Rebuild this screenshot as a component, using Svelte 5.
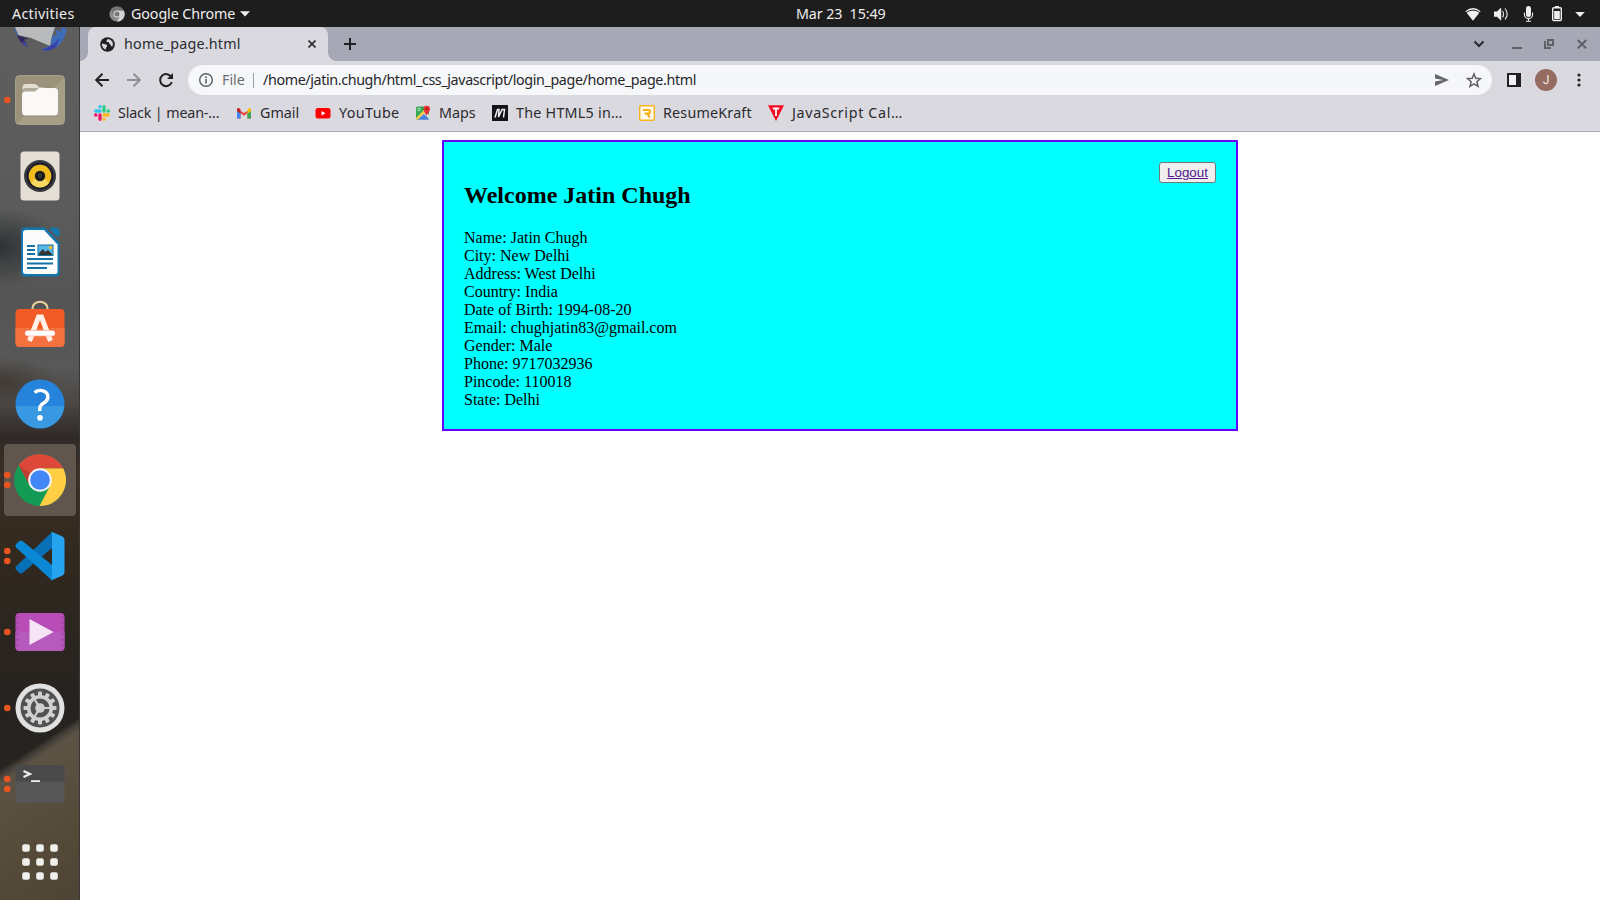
<script>
  const details = [
    ['Name', 'Jatin Chugh'],
    ['City', 'New Delhi'],
    ['Address', 'West Delhi'],
    ['Country', 'India'],
    ['Date of Birth', '1994-08-20'],
    ['Email', 'chughjatin83@gmail.com'],
    ['Gender', 'Male'],
    ['Phone', '9717032936'],
    ['Pincode', '110018'],
    ['State', 'Delhi']
  ];

  const dock = [
    { id: 'mail', dots: 0 },
    { id: 'files', dots: 1 },
    { id: 'music', dots: 0 },
    { id: 'writer', dots: 0 },
    { id: 'software', dots: 0 },
    { id: 'help', dots: 0 },
    { id: 'chrome', dots: 2, active: true },
    { id: 'code', dots: 2 },
    { id: 'videos', dots: 1 },
    { id: 'settings', dots: 1 },
    { id: 'terminal', dots: 2 },
    { id: 'apps', dots: 0 }
  ];

  // width: slot from the start of the icon to the start of the next one
  const bookmarks = [
    { id: 'slack', label: 'Slack | mean-…', width: 142 },
    { id: 'gmail', label: 'Gmail', width: 79 },
    { id: 'youtube', label: 'YouTube', width: 100 },
    { id: 'maps', label: 'Maps', width: 77 },
    { id: 'html5', label: 'The HTML5 in…', width: 147 },
    { id: 'resume', label: 'ResumeKraft', width: 129 },
    { id: 'js', label: 'JavaScript Cal…', width: 160 }
  ];

  const teeth = [0, 30, 60, 90, 120, 150, 180, 210, 240, 270, 300, 330];
  const grid = [-14, 0, 14];
</script>

<div class="screen">
  <header class="topbar">
    <span class="activities">Activities</span>
    <svg class="app-icon" width="16" height="16" viewBox="-8 -8 16 16">
      <circle r="7.6" fill="#8c8c8c" />
      <path d="M0-3.6H6.8A7.6 7.6 0 0 1 0 7.6L3.1 1.8Z" fill="#d2d2d2" />
      <path d="M-6.5-3.9A7.6 7.6 0 0 1 6.7-3.6H0L-3.1 1.8Z" fill="#737373" />
      <circle r="3.5" fill="#ddd" /><circle r="2.5" fill="#777" />
    </svg>
    <span class="app-name">Google Chrome</span>
    <svg class="app-caret" width="10" height="6" viewBox="0 0 10 6"><path d="M0 .3H10L5 5.6Z" fill="#eee" /></svg>
    <span class="clock">Mar 23&nbsp; 15:49</span>
    <svg class="status" width="124" height="20" viewBox="1464 3 124 20" fill="#efefef">
      <path d="M1465.4 10.2Q1473 4 1480.6 10.2L1473 19.8Z" fill="#efefef" />
      <path d="M1466 11.7Q1473 6.3 1480 11.7" fill="none" stroke="#1d1d1d" stroke-width="1" />
      <path d="M1494 10.5h3l4.2-4v13.2l-4.2-4h-3z" />
      <path d="M1502.5 10q2.2 3 0 6.3M1505 7.5q4.4 5.5 0 11" fill="none" stroke="#dedede" stroke-width="1.2" />
      <rect x="1526" y="5" width="5" height="11" rx="2.5" />
      <path d="M1524.4 11.5v2a4.1 4.1 0 0 0 8.2 0v-2M1528.5 17.6v2.8M1526 20.3h5" fill="none" stroke="#efefef" stroke-width="1.1" />
      <rect x="1552.7" y="6.7" width="8.6" height="12.8" rx="1" fill="none" stroke="#efefef" stroke-width="1.4" />
      <rect x="1555" y="5" width="4" height="1.5" /><rect x="1554.2" y="10" width="5.6" height="8" />
      <path d="M1575.2 11h9.6l-4.8 5z" />
    </svg>
  </header>

  <div class="desktop">
    <nav class="dock">
      {#each dock as item}
        <div class="dock-item" class:active={item.active} class:apps={item.id === 'apps'}>
          <svg width="72" height="72" viewBox="-36 -36 72 72">
            {#if item.id === 'mail'}
              <path d="M-25 3H15L12 12L10 22L-9 14L-22 11Z" fill="#b9babb" />
              <path d="M-25 4L-22 10L-22 13L-26 6Z" fill="#3f62a4" />
              <path d="M-23 11L-11 15L-16 15.500L-12 23Q-20 20-23 11Z" fill="#33265f" />
              <path d="M-19 17L-14 19L-12 23Q-17 21-19 17Z" fill="#3f45a8" />
              <path d="M27 5Q24 17 17 23Q9 28 1 26L11 21L12 12L17 11L15 5L20 8L22 3Z" fill="#3d6cb8" />
              <path d="M1 26Q10 24 20 14L16 23Q9 28 1 26Z" fill="#3c3faa" />
            {:else if item.id === 'files'}
              <rect x="-24.500" y="-24.500" width="49" height="49" rx="4" fill="#9c927b" stroke="#b0a993" stroke-width=".8" />
              <path d="M-24 24L24-22V20Q24 24 20 24H-20Q-24 24-24 20Z" fill="#a79e87" />
              <path d="M-17.500 0V-12.500Q-17.500-16-14-16H-5Q-3-16-1-12.500H4V0Z" fill="#e3dfd5" />
              <rect x="-18" y="-12" width="36" height="28.500" rx="4" fill="#807763" opacity=".5" />
              <path d="M-18-5Q-18-8.500-14.500-8.500H-5L-1-12H14.500Q18-12 18-8.500V12Q18 15.500 14.500 15.500H-14.500Q-18 15.500-18 12Z" fill="#faf9f7" />
            {:else if item.id === 'music'}
              <rect x="-19.500" y="-24.500" width="39" height="49" rx="3.500" fill="#e3dfd4" />
              <circle r="16" fill="#3c3c42" /><circle r="13.700" fill="#1d1e2a" />
              <circle r="11.300" fill="#f0bd1c" /><path d="M-9 7A11.300 11.300 0 0 0 9 7L4 2H-4Z" fill="#fad860" />
              <circle r="5.200" fill="#1b1b1b" /><circle r="2.300" cy="-.6" fill="#343434" />
            {:else if item.id === 'writer'}
              <path d="M-15.500-24.500H5L19.500-9.500V20.500Q19.500 24.500 15.500 24.500H-15.500Q-19 24.500-19 20.500V-20.500Q-19-24.500-15.500-24.500Z" fill="#1377ad" />
              <path d="M-14-22H4L17.500-7.500V19.500Q17.500 22 15 22H-14Q-17 22-17 19.500V-19.500Q-17-22-14-22Z" fill="#fcfcfc" />
              <path d="M9.500-24.500H15.500Q19.500-24.500 19.500-20.500V-15Q13.500-16 9.500-24.500Z" fill="#1478ae" />
              <g fill="#1672a3">
                <rect x="-13" y="-7" width="8" height="2" /><rect x="-13" y="-3" width="8" height="2" /><rect x="-13" y="1" width="8" height="2" />
                <rect x="-13" y="6" width="26" height="2" /><rect x="-13" y="10.500" width="26" height="2" /><rect x="-13" y="15" width="20" height="2" />
              </g>
              <rect x="-2" y="-7" width="15" height="10.500" fill="#58b7e9" stroke="#1672a3" />
              <path d="M-1 3V1L3-3L5 0L8-2L12 2V3Z" fill="#333" /><circle cx="10.500" cy="-4.500" r="1.800" fill="#edbd28" />
            {:else if item.id === 'software'}
              <path d="M-7.500-19V-20A7.500 6.200 0 0 1 7.500-20V-18" fill="none" stroke="#e7cf9e" stroke-width="2" />
              <rect x="-24.500" y="-19" width="49" height="38" rx="4" fill="#f15a24" />
              <path d="M-24.500 0H24.500V15Q24.500 19 20.500 19H-20.500Q-24.500 19-24.500 15Z" fill="#f3713e" />
              <path d="M-10.500 13L-1.500-11H1.500L10.500 13" fill="none" stroke="#fff0e9" stroke-width="5" />
              <rect x="-15" y="2.500" width="30" height="5.500" rx="2.500" fill="#fff" stroke="#f9a98b" stroke-width=".6" />
            {:else if item.id === 'help'}
              <circle r="24.500" fill="#2583dc" /><path d="M-24.400 2H24.400A24.500 24.500 0 0 1-24.400 2Z" fill="#3998e2" />
              <path d="M-5.500-11.500Q-1.500-14.500 3-13.200Q8.500-11.500 7.800-6Q7-2.500 3-.5Q-.5 1.500-.3 7" fill="none" stroke="#fff" stroke-width="3.400" />
              <circle cy="13.800" r="2.900" fill="#fff" />
            {:else if item.id === 'chrome'}
              <circle r="26" fill="#139b56" />
              <path d="M0-11.700H23.200A26 26 0 0 1-.5 26L10.100 5.800Z" fill="#ffce44" />
              <path d="M-21.300-14.800A26 26 0 0 1 23.200-11.700H0L-10.100 5.800Z" fill="#de4839" />
              <path d="M-21.300-14.800L-10.100 5.800L-10-7Z" fill="#ae3830" opacity=".6" />
              <circle r="11.800" fill="#f3f3f8" /><circle r="9.800" fill="#4285f4" />
            {:else if item.id === 'code'}
              <path d="M12-24L-24 10.500Q-25.300 12-24 13.500L-20.500 17Q-19.200 18-17.500 17L12-8Z" fill="#0770b6" />
              <path d="M12 24.500L-24-8.500Q-25.300-10.500-24-12L-20.500-15Q-19-16-17.500-15L12 9Z" fill="#0a87d5" />
              <path d="M11-24.500L22.500-19.500Q24.500-18.500 24.500-16V16Q24.500 18.500 22.500 19.500L11 24.500Q12 24 12 21V-21Q12-24 11-24.500Z" fill="#26a3ef" />
            {:else if item.id === 'videos'}
              <rect x="-24.500" y="-19" width="49" height="38" rx="4" fill="#b94db8" />
              <path d="M-24.500 0H24.500V15Q24.500 19 20.500 19H-20.500Q-24.500 19-24.500 15Z" fill="#b65bbd" />
              <path d="M-22.500-16V18M22.500-16V18" stroke="#9a48a6" stroke-width="3" stroke-dasharray="3 2.500" opacity=".55" />
              <path d="M-10.500-13L13.500 0L-10.500 13Z" fill="#f5e5f4" />
            {:else if item.id === 'settings'}
              <circle r="24.500" fill="#e1e1e1" /><circle r="19.500" fill="#515151" />
              {#each teeth as angle}
                <rect x="-2" y="-16.500" width="4" height="5" rx="1" fill="#d0d0d0" transform="rotate({angle})" />
              {/each}
              <circle r="11.300" fill="none" stroke="#d0d0d0" stroke-width="3.500" />
              <circle r="4.800" fill="#d0d0d0" />
              <path d="M0 0H11M0 0L-6-9.500M0 0L-6 9.500" stroke="#d0d0d0" stroke-width="2.200" />
            {:else if item.id === 'terminal'}
              <rect x="-24.500" y="-19" width="49" height="38" rx="4" fill="#565656" />
              <path d="M-20.500-19H20.500Q24.500-19 24.500-15V-2.500H-24.500V-15Q-24.500-19-20.500-19Z" fill="#494949" />
              <path d="M-16.500-13L-10-10L-16.500-7" fill="none" stroke="#eee" stroke-width="2.200" />
              <rect x="-9" y="-3.800" width="9" height="1.800" fill="#eee" />
            {:else}
              {#each grid as y}
                {#each grid as x}
                  <rect x={x - 3.8} y={y - 3.8} width="7.600" height="7.600" rx="2" fill="#f0f0ee" />
                {/each}
              {/each}
            {/if}
            {#if item.dots === 1}
              <circle cx="-32.700" r="3.300" fill="#e95420" />
            {:else if item.dots === 2}
              <circle cx="-32.700" cy="-5" r="3.300" fill="#e95420" /><circle cx="-32.700" cy="5" r="3.300" fill="#e95420" />
            {/if}
          </svg>
        </div>
      {/each}
    </nav>

    <section class="browser">
      <div class="tabstrip">
        <div class="tab">
          <svg width="15" height="15" viewBox="0 0 15 15">
            <circle cx="7.500" cy="7.500" r="7.300" fill="#202124" />
            <path d="M1.800 6.600L5 7.200Q7.500 7.200 7 9.500Q5.500 10.500 5.700 12.800Q2 11.300 1.800 6.600ZM8.200 2Q5.500 3.500 7 5L9 5.200Q9 7 10.500 7.500Q10.500 9.500 12.400 9.800Q13.500 7.500 12.500 5Q11 2.500 8.200 2Z" fill="#dad9df" />
          </svg>
          <span class="tab-title">home_page.html</span>
          <svg width="8" height="8" viewBox="0 0 8 8"><path d="M.5.5L7.500 7.500M7.500.5L.5 7.500" stroke="#2a2a2e" stroke-width="1.600" /></svg>
        </div>
        <svg class="plus" width="12" height="12" viewBox="0 0 12 12"><path d="M6 0V12M0 6H12" stroke="#202124" stroke-width="2" /></svg>
        <svg class="controls" width="118" height="14" viewBox="1472 37 118 14" fill="none" stroke="#5f6066" stroke-width="2">
          <path d="M1474.500 41.500L1479 46L1483.500 41.500" stroke="#28282c" />
          <path d="M1512 48H1522" />
          <path d="M1548 40H1553V45H1548ZM1545 41V48H1551" />
          <path d="M1577.800 40L1586.200 48.400M1586.200 40L1577.800 48.400" />
        </svg>
      </div>

      <div class="toolbar">
        <svg width="80" height="16" viewBox="94 72 80 16" fill="none" stroke="#202124" stroke-width="2">
          <path d="M109 80H96.500M102.500 73.700L96.200 80L102.500 86.300" />
          <path d="M127 80H139.500M133.500 73.700L139.800 80L133.500 86.300" stroke="#8f8f96" />
          <path d="M171.300 77A6 6 0 1 0 171.800 82.200" /><path d="M173 73V79H167Z" fill="#202124" stroke="none" />
        </svg>
        <div class="omnibox">
          <svg width="14" height="14" viewBox="0 0 14 14"><circle cx="7" cy="7" r="6.300" fill="none" stroke="#5b5d62" stroke-width="1.400" /><path d="M7 6V10.500M7 3.300V4.900" stroke="#5b5d62" stroke-width="1.600" /></svg>
          <span class="scheme">File</span>
          <span class="divider"></span>
          <span class="url">/home/jatin.chugh/html_css_javascript/login_page/home_page.html</span>
          <svg class="actions" width="48" height="16" viewBox="1434 72 48 16">
            <path d="M1435 74L1449 80L1435 86V81.500L1443 80L1435 78.500Z" fill="#66676c" />
            <path d="M1474 74L1475.800 78.300L1480.400 78.700L1476.900 81.700L1478 86.300L1474 83.800L1470 86.300L1471.100 81.700L1467.600 78.700L1472.200 78.300Z" fill="none" stroke="#5f6066" stroke-width="1.500" />
          </svg>
        </div>
        <svg class="panel" width="14" height="14" viewBox="0 0 14 14"><rect x="1" y="1" width="12" height="12" fill="#f0f0f3" stroke="#202124" stroke-width="2" /><rect x="9" width="5" height="14" fill="#202124" /></svg>
        <span class="avatar">J</span>
        <svg class="kebab" width="4" height="14" viewBox="0 0 4 14" fill="#202124"><circle cx="2" cy="2" r="1.600" /><circle cx="2" cy="7" r="1.600" /><circle cx="2" cy="12" r="1.600" /></svg>
      </div>

      <div class="bookmarks">
        {#each bookmarks as mark}
          <div class="bookmark {mark.id}" style:width="{mark.width}px">
            <svg width="16" height="16" viewBox="0 0 16 16">
              {#if mark.id === 'slack'}
                <g fill="none" stroke-width="3.300" stroke-linecap="round">
                  <path d="M1.700 6H6" stroke="#36c5f0" /><path d="M6 1.700V1.900" stroke="#36c5f0" />
                  <path d="M10 1.700V6M14.100 6H14.300" stroke="#2ecc85" />
                  <path d="M10 10H14.300M10 14.100V14.300" stroke="#fdba22" />
                  <path d="M6 10V14.300M1.700 10H1.900" stroke="#f01563" />
                </g>
              {:else if mark.id === 'gmail'}
                <path d="M1 4V13.500H4.500V8L8 10.700L11.500 8V13.500H15V4L8 8Z" fill="#ea4335" />
                <path d="M1 5V12.500Q1 13.500 2 13.500H4.500V6Z" fill="#4285f4" /><path d="M15 5V12.500Q15 13.500 14 13.500H11.500V6Z" fill="#34a853" />
                <path d="M11.500 5L13 3Q15 2.500 15 4.500V6L11.500 8.700Z" fill="#fbbc04" />
                <path d="M1 6V4.500Q1 2.500 3 3L4.500 4.500V8.700Z" fill="#c5221f" />
              {:else if mark.id === 'youtube'}
                <rect x=".5" y="3" width="15" height="10.500" rx="2.500" fill="#f00" /><path d="M6.500 6L10.500 8.200L6.500 10.500Z" fill="#fff" />
              {:else if mark.id === 'maps'}
                <rect x="1" y="1.500" width="13" height="13" rx="1.500" fill="#34a853" />
                <path d="M2 14.500L8 8.500L14 14.500Z" fill="#4c7cf0" />
                <path d="M1 13L9 5L11 7L3 14.500H1Z" fill="#f6cf46" /><path d="M8.500 8.500L11 6.500L14 10V14Z" fill="#dadce0" />
                <path d="M11.500 10.500Q8.500 6 8.500 4A3.200 3.200 0 0 1 15 4Q15 6 11.500 10.500Z" fill="#ea3335" /><circle cx="11.700" cy="3.800" r="1.100" fill="#8e1717" />
                <circle cx="4" cy="4.500" r="1.300" fill="none" stroke="#d7f1df" stroke-width=".8" />
              {:else if mark.id === 'html5'}
                <rect width="16" height="16" fill="#131319" />
                <path d="M3 12.500L5.500 4.500H7L6.500 12L10 4.500H12.500L11.500 12.500" fill="none" stroke="#f0f0f0" stroke-width="1.500" />
              {:else if mark.id === 'resume'}
                <rect x=".7" y=".7" width="14.600" height="14.600" rx="1" fill="#fffaf0" stroke="#f8b516" stroke-width="1.400" />
                <path d="M4 5H9.500Q11 5 11 6.500Q11 8.500 9.500 8.500H5.500M8.500 8.500L10.500 12.500" fill="none" stroke="#f8ad10" stroke-width="2" />
              {:else}
                <path d="M0 .3H16L8 16Z" fill="#f50a20" /><path d="M4.800 3.500H11.200M8 3.500V11" stroke="#fff" stroke-width="1.800" />
              {/if}
            </svg>
            <span>{mark.label}</span>
          </div>
        {/each}
      </div>

      <main class="page">
        <div class="card">
          <button class="logout"><a href="#logout">Logout</a></button>
          <h2>Welcome Jatin Chugh</h2>
          {#each details as [name, value]}
            <div>{name}: {value}</div>
          {/each}
        </div>
      </main>
    </section>
  </div>
</div>

<style>
  :global(body) { overflow: hidden; }
  .screen {
    width: 1600px; height: 900px; display: flex; flex-direction: column; overflow: hidden;
    font-family: "Noto Sans", "Open Sans", sans-serif; font-size: 14.3px; color: #2b2b30; background: #fff;
  }
  svg { display: block; flex: none; }
  span { white-space: nowrap; }

  .topbar {
    height: 27px; flex: none; box-sizing: border-box; padding: 0 12px; background: #1d1d1d; color: #eee;
    display: flex; align-items: center; line-height: 27px;
  }
  .activities { width: 97px; letter-spacing: .3px; }
  .app-icon { margin-right: 6px; }
  .app-name { width: 104px; margin-right: 5px; letter-spacing: -.1px; }
  .clock { margin-left: 546px; letter-spacing: -.1px; }
  .status { margin-left: auto; }

  .desktop { flex: 1; display: flex; min-height: 0; }
  .dock {
    position: relative; width: 80px; box-sizing: border-box; padding-left: 4px; border-right: 1px solid #383735; overflow: hidden;
    display: flex; flex-direction: column; gap: 4px;
    background:
      radial-gradient(ellipse 60px 40px at 0 220px, #24292bcc, transparent),
      radial-gradient(ellipse 60px 25px at 0 355px, #3d342ccc, transparent),
      linear-gradient(#5e5e5e 0, #5b5b5b 180px, #555 270px, #585858 340px, #4b4845 375px, #302a27 410px, #3c2f25 450px, #32291f 520px, #2b2520 620px, #25221f 690px, #292521 760px);
  }
  .dock::before {
    content: ''; position: absolute; left: 0; right: 0; top: 660px; bottom: 0;
    background: linear-gradient(146.500deg, transparent 69px, #3f3b34 73px, #5c5345 80px, #554a38 160px, #4b4233 240px);
  }
  .dock-item { position: relative; z-index: 1; width: 72px; height: 72px; flex: none; border-radius: 4px; }
  .dock-item:first-child { margin-top: -39px; }
  .dock-item.active { background: #61564d; }
  .dock-item.apps { margin-top: 2px; }

  .browser { flex: 1; display: flex; flex-direction: column; min-width: 0; background: #dad9df; }
  .tabstrip { height: 34px; flex: none; display: flex; align-items: center; padding: 0 10px 0 8px; background: #a7a8b6; }
  .tab {
    position: relative; width: 240px; height: 34px; box-sizing: border-box; padding: 0 12px; border-radius: 8px 8px 0 0;
    background: #dad9df; display: flex; align-items: center;
  }
  .tab::before, .tab::after { content: ''; position: absolute; bottom: 0; width: 8px; height: 8px; }
  .tab::before { left: -8px; background: radial-gradient(circle at 0 0, transparent 7.500px, #dad9df 8px); }
  .tab::after { right: -8px; background: radial-gradient(circle at 100% 0, transparent 7.500px, #dad9df 8px); }
  .tab-title { margin: 0 auto 2px 9px; letter-spacing: .2px; }
  .plus { margin-left: 16px; }
  .controls { margin-left: auto; }

  .toolbar { height: 38px; flex: none; display: flex; align-items: center; padding-left: 14px; }
  .omnibox {
    width: 1304px; height: 30px; box-sizing: border-box; margin-left: 14px; padding: 0 10px 0 11px; border-radius: 15px;
    background: #f6f7f9; display: flex; align-items: center;
  }
  .scheme { width: 31px; margin: 0 0 2px 9px; color: #6a6c73; }
  .divider { width: 1px; height: 15px; background: #9b9ca1; }
  .url { margin: 0 0 2px 9px; color: #26262b; letter-spacing: -.38px; }
  .actions { margin-left: auto; }
  .panel { margin-left: 15px; }
  .avatar {
    width: 22px; height: 22px; margin-left: 14px; border-radius: 50%; background: #956b62; color: #f4eae7;
    font: 12px/22px Roboto, sans-serif; text-align: center;
  }
  .kebab { margin-left: 19.500px; }

  .bookmarks {
    height: 33px; box-sizing: border-box; flex: none; display: flex; padding: 0 0 5px 14px; border-bottom: 1px solid #abaaaf;
  }
  .bookmark { display: flex; align-items: center; gap: 8px; flex: none; }
  .slack { letter-spacing: -.15px; }
  .youtube { letter-spacing: .4px; }
  .html5 { letter-spacing: .25px; }
  .resume { letter-spacing: .2px; }
  .js { letter-spacing: .65px; }

  .page {
    flex: 1; box-sizing: border-box; padding-top: 8px; background: #fff; color: #000;
    font: 16px/18px "Liberation Serif", serif;
  }
  .card {
    width: 796px; height: 291px; box-sizing: border-box; margin: 0 auto; padding: 20px;
    border: 2px solid #60f; background: #0ff; display: flow-root;
  }
  h2 { margin: 20px 0; font-size: 24px; line-height: 27px; }
  .logout {
    float: right; width: 57px; height: 21px; padding: 0; border: 1px solid #767676; border-radius: 3px; background: #efefef;
    font: 13.333px/15px "Liberation Sans", sans-serif;
  }
  .logout a { color: #551a8b; }
</style>
